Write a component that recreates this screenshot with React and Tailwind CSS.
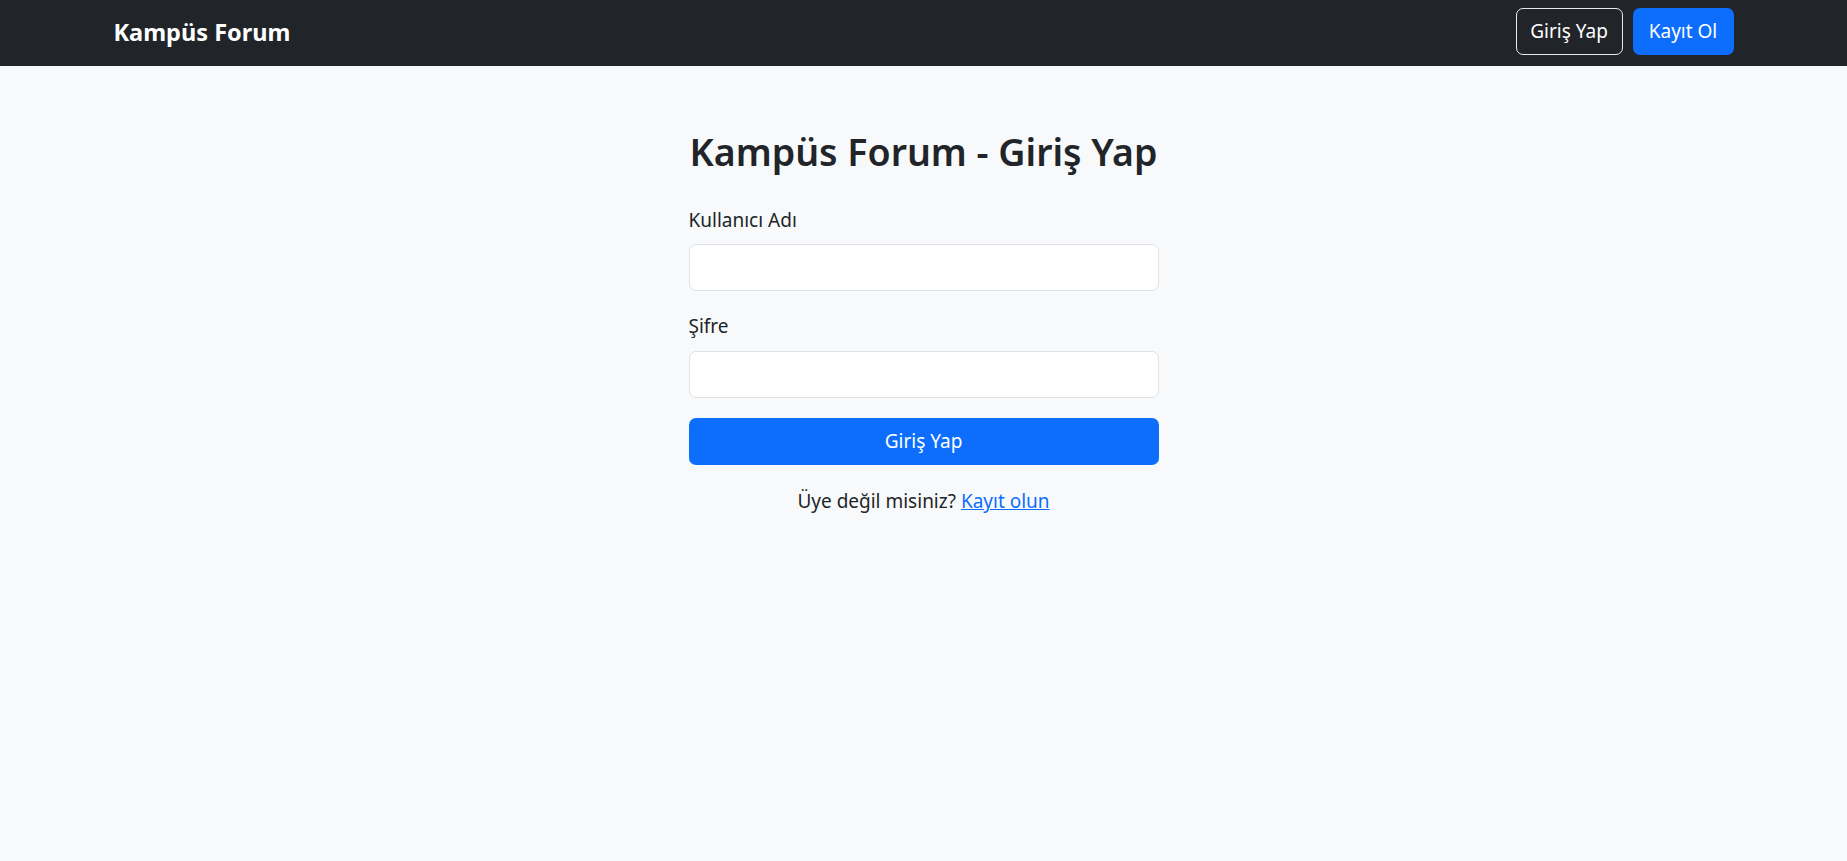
import { useState } from 'react'

export default function App() {
  const [username, setUsername] = useState('')
  const [password, setPassword] = useState('')

  const handleSubmit = (e) => {
    e.preventDefault()
  }

  return (
    <div className="min-h-screen bg-[#f8f9fa] text-[#212529] font-['Noto_Sans',sans-serif]">
      <nav className="h-[66px] bg-[#212529] flex items-center">
        <div className="w-[1620px] mx-auto flex justify-between items-center">
          <a href="#" className="text-white font-bold text-[23.5px] leading-none whitespace-nowrap -mt-[1px]">
            Kampüs Forum
          </a>
          <div className="flex gap-[10px] -mt-[3px]">
            <button className="h-[47px] w-[107px] rounded-[7px] border border-white/90 text-white text-[19px]">
              Giriş Yap
            </button>
            <button className="h-[47px] w-[101px] rounded-[7px] bg-[#0d6efd] text-white text-[19px]">
              Kayıt Ol
            </button>
          </div>
        </div>
      </nav>

      <div className="w-[470px] mx-auto pt-[62px]">
        <h2 className="flex justify-center whitespace-nowrap -mx-[60px] text-[37.5px] leading-[48px] font-semibold mb-[29px]">
          Kampüs Forum - Giriş Yap
        </h2>
        <form onSubmit={handleSubmit}>
          <div className="mb-[20px]">
            <label className="block text-[19px] leading-[30px] mb-[9px]">Kullanıcı Adı</label>
            <input
              value={username}
              onChange={e => setUsername(e.target.value)}
              className="w-full h-[47px] bg-white border border-[#dee2e6] rounded-[7px] px-3 text-[19px] outline-none"
            />
          </div>
          <div className="mb-[20px]">
            <label className="block text-[19px] leading-[30px] mb-[10px]">Şifre</label>
            <input
              type="password"
              value={password}
              onChange={e => setPassword(e.target.value)}
              className="w-full h-[47px] bg-white border border-[#dee2e6] rounded-[7px] px-3 text-[19px] outline-none"
            />
          </div>
          <button
            type="submit"
            className="w-full h-[47px] bg-[#0d6efd] text-white text-[19px] rounded-[7px]"
          >
            Giriş Yap
          </button>
        </form>
        <p className="text-center text-[19px] leading-[30px] mt-[21px]">
          Üye değil misiniz? <a href="#" className="text-[#0d6efd] underline">Kayıt olun</a>
        </p>
      </div>
    </div>
  )
}
